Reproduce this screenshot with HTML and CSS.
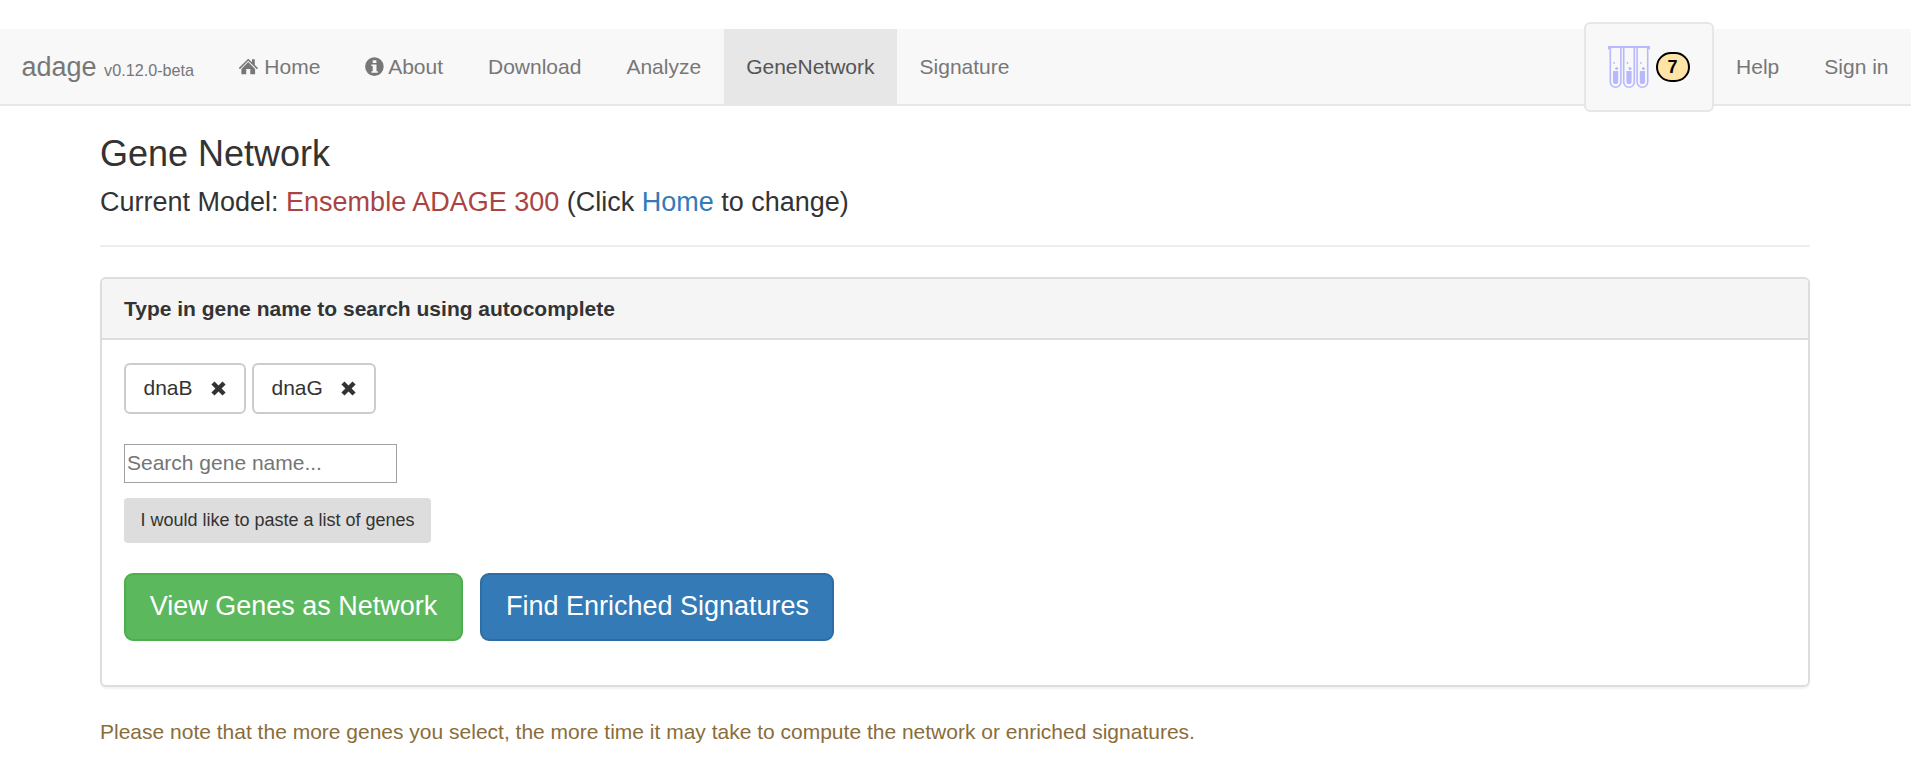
FILE: index.html
```html
<!DOCTYPE html>
<html lang="en">
<head>
<meta charset="utf-8">
<title>adage - Gene Network</title>
<link rel="stylesheet" href="styles.css">
</head>
<body>
<nav class="navbar">
  <a class="brand">adage <small class="version">v0.12.0-beta</small></a>
  <ul class="nav">
    <li><a class="nav-link"><svg class="icon icon-home" viewBox="0 0 19 21"><path fill="currentColor" d="M9.200 1.700L13 5.300V2.200h2.800v5.700l3.200 3.200-1.100 1.100L9.200 3.800.9 12.200-.2 11.100z"/><path fill="currentColor" d="M9.200 5.100l6.900 6.800V17.200h-4.800v-5.300H7.200v5.300H2.400v-5.300z"/></svg> Home</a></li>
    <li><a class="nav-link"><svg class="icon icon-info" viewBox="0 0 19 21"><path fill="currentColor" fill-rule="evenodd" d="M9.400.3a9.300 9.300 0 1 1 0 18.600 9.300 9.300 0 1 1 0-18.600zM7.700 3.300v2.800h3.700V3.300zM6.400 7.400v1.600h1.300v5.200H6.400v1.600h6.500v-1.600h-1.400V7.400z"/></svg> About</a></li>
    <li><a class="nav-link">Download</a></li>
    <li><a class="nav-link">Analyze</a></li>
    <li><a class="nav-link active">GeneNetwork</a></li>
    <li><a class="nav-link">Signature</a></li>
  </ul>
  <ul class="nav nav-right">
    <li><a class="basket">
      <svg class="tubes" viewBox="0 0 42 44">
        <defs>
          <g id="tube">
            <path d="M1.700 2v35a5.300 5.300 0 0 0 10.600 0V2" fill="none" stroke="#b8b8ff" stroke-width="1.600"/>
            <path d="M4.400 26h5.200v10.500a2.600 2.600 0 0 1-5.200 0z" fill="#b8b8ff"/>
            <circle cx="8" cy="23.500" r="1.500" fill="#b8b8ff"/>
            <circle cx="5.500" cy="18" r=".9" fill="#b8b8ff"/>
          </g>
        </defs>
        <path d="M.8 4.500V2h40.400v2.500" fill="none" stroke="#b8b8ff" stroke-width="1.800"/>
        <use href="#tube" x=".6"/><use href="#tube" x="14"/><use href="#tube" x="27.400"/>
      </svg><span class="badge">7</span>
    </a></li>
    <li><a class="nav-link">Help</a></li>
    <li><a class="nav-link">Sign in</a></li>
  </ul>
</nav>
<main class="container">
  <h3 class="title">Gene Network</h3>
  <h4 class="model">Current Model: <span class="model-name">Ensemble ADAGE 300</span> (Click <a class="link">Home</a> to change)</h4>
  <hr class="rule">
  <section class="panel">
    <div class="panel-heading">Type in gene name to search using autocomplete</div>
    <div class="panel-body">
      <div class="tags">
        <button class="tag tag-b">dnaB <svg class="remove" viewBox="0 0 15 15"><path fill="currentColor" d="M3.500.4L7.500 4.400 11.500.4 14.600 3.500 10.600 7.500 14.600 11.500 11.500 14.600 7.500 10.600 3.500 14.600.4 11.500 4.400 7.500.4 3.500z"/></svg></button>
        <button class="tag tag-g">dnaG <svg class="remove" viewBox="0 0 15 15"><path fill="currentColor" d="M3.500.4L7.500 4.400 11.500.4 14.600 3.500 10.600 7.500 14.600 11.500 11.500 14.600 7.500 10.600 3.500 14.600.4 11.500 4.400 7.500.4 3.500z"/></svg></button>
      </div>
      <input class="search" type="text" placeholder="Search gene name...">
      <button class="paste">I would like to paste a list of genes</button>
      <div class="actions">
        <button class="action view">View Genes as Network</button>
        <button class="action find">Find Enriched Signatures</button>
      </div>
    </div>
  </section>
  <p class="note">Please note that the more genes you select, the more time it may take to compute the network or enriched signatures.</p>
</main>
</body>
</html>
```
FILE: styles.css
```css
* { box-sizing: border-box; }
body {
  margin: 0;
  padding-top: 29px;
  background: #fff;
  color: #333;
  font-family: "Liberation Sans", Arial, sans-serif;
  font-size: 21px;
  line-height: 30px;
  overflow: hidden;
}
button, input { font-family: inherit; margin: 0; }
.navbar {
  display: flex;
  height: 77px;
  background: #f8f8f8;
  border-bottom: 2px solid #e7e7e7;
  color: #777;
}
.brand { padding: 22.5px 22.5px 22.5px 21.500px; font-size: 27px; white-space: nowrap; }
.version { font-size: 16.200px; }
.nav { display: flex; list-style: none; margin: 0; padding: 0; }
.nav-right { margin-left: auto; }
.nav-link { display: block; height: 75px; padding: 22.500px; white-space: nowrap; }
.active { height: 77px; background: #e7e7e7; color: #555; }
.icon { width: 19px; height: 21px; vertical-align: -4px; overflow: visible; }
.icon-home { margin-right: .4px; }
.icon-info { margin-right: -.9px; }
.basket {
  display: flex;
  align-items: center;
  width: 130px;
  height: 90px;
  margin-top: -7px;
  padding-left: 22px;
  background: #f8f8f8;
  border: 2px solid #e7e7e7;
  border-radius: 6px;
}
.tubes { width: 42px; height: 44px; margin-right: 6px; }
.badge {
  width: 34px;
  height: 30px;
  border: 2px solid #000;
  border-radius: 15px;
  background: #ffe4a5;
  color: #000;
  font-size: 18px;
  font-weight: bold;
  line-height: 26px;
  text-align: center;
}
.container { width: 1710px; margin: 0 0 0 100px; }
.title { margin: 0; padding-top: 28px; font-size: 36px; line-height: 40px; }
.model { margin: 13px 0 0; font-size: 27px; line-height: 30px; }
.title, .model { font-weight: normal; }
.model-name { color: #a94442; }
.link { color: #337ab7; }
.rule { height: 2px; margin: 28px 0 30px; border: 0; background: #eee; }
.panel {
  height: 410px;
  border: 2px solid #ddd;
  border-radius: 6px;
  box-shadow: 0 1.500px 1.500px rgba(0, 0, 0, .05);
}
.panel-heading {
  height: 61px;
  padding: 15px 22px;
  background: #f5f5f5;
  border-bottom: 2px solid #ddd;
  border-radius: 4px 4px 0 0;
  font-weight: bold;
}
.panel-body { display: flex; flex-direction: column; align-items: flex-start; padding: 23px 22px; }
.tags { display: flex; gap: 6px; }
.tag {
  display: flex;
  align-items: center;
  justify-content: space-between;
  width: 122px;
  height: 51px;
  padding: 0 18px 2px 17.500px;
  border: 2px solid #ccc;
  border-radius: 6px;
  background: #fff;
  color: #333;
  font-size: 21px;
}
.tag-g { width: 124px; }
.remove { width: 15px; height: 15px; margin-top: 1px; }
.search {
  width: 273px;
  height: 39px;
  margin-top: 30px;
  padding: 0 2px 2px;
  border: 1px solid #a0a0a0;
  font-size: 21px;
}
.search::placeholder { color: #757575; }
.paste {
  width: 307px;
  height: 45px;
  margin-top: 15px;
  padding: 0;
  border: 0;
  border-radius: 4px;
  background: #ddd;
  color: #333;
  font-size: 18px;
}
.actions { display: flex; gap: 17px; margin-top: 30px; }
.action { height: 68px; padding: 0 0 2px; border: 2px solid; border-radius: 9px; color: #fff; font-size: 27px; }
.view { width: 339px; background: #5cb85c; border-color: #4cae4c; }
.find { width: 354px; padding-left: 1px; background: #337ab7; border-color: #2e6da4; }
.note { margin: 30px 0 0; color: #8a6d3b; }
```
